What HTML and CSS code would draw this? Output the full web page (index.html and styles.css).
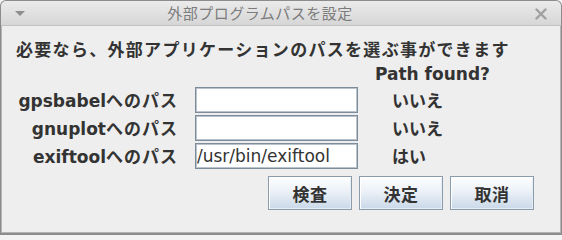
FILE: index.html
```html
<!DOCTYPE html>
<html lang="ja">
<head>
<meta charset="utf-8">
<title>外部プログラムパスを設定</title>
<link rel="stylesheet" href="styles.css">
</head>
<body>
<div class="window">
  <div class="titlebar">
    <span class="menu-tri"></span>
    <span class="title">外部プログラムパスを設定</span>
    <svg class="close" width="12" height="12" viewBox="0 0 12 12"><path d="M1.5 1.5 L10.5 10.5 M10.5 1.5 L1.5 10.5" stroke="#a0a0a0" stroke-width="2.4" stroke-linecap="round"/></svg>
  </div>
  <div class="content">
    <p class="heading">必要なら、外部アプリケーションのパスを選ぶ事ができます</p>
    <div class="grid">
      <span class="col-head">Path found?</span>

      <span class="label">gpsbabel<span class="jp">へのパス</span></span>
      <input class="field" type="text" value="">
      <span class="status">いいえ</span>

      <span class="label">gnuplot<span class="jp">へのパス</span></span>
      <input class="field" type="text" value="">
      <span class="status">いいえ</span>

      <span class="label">exiftool<span class="jp">へのパス</span></span>
      <input class="field" type="text" value="/usr/bin/exiftool">
      <span class="status">はい</span>
    </div>
    <div class="buttons">
      <button class="btn">検査</button>
      <button class="btn">決定</button>
      <button class="btn">取消</button>
    </div>
  </div>
</div>
</body>
</html>
```

FILE: styles.css
```css
html, body {
  margin: 0;
  padding: 0;
  background: #f3f3f3;
}

.window {
  box-sizing: border-box;
  width: 562px;
  height: 235px;
  border: 1px solid #8c8c8c;
  border-bottom-width: 2px;
  border-radius: 6px 6px 0 0;
  background: #eeeeee;
  box-shadow: inset 1px 0 #b4b4b4, inset -1px 0 #b4b4b4, inset 0 -1px #b4b4b4;
  font-family: "DejaVu Sans", "Noto Sans CJK JP", sans-serif;
  color: #333333;
  overflow: hidden;
}

.titlebar {
  box-sizing: border-box;
  height: 25px;
  display: flex;
  align-items: center;
  padding: 0 14px 0 14px;
  background: linear-gradient(#ebebeb, #d6d6d6);
  border-bottom: 1px solid #c2c2c2;
  border-radius: 5px 5px 0 0;
}

.menu-tri {
  width: 0;
  height: 0;
  border-left: 5px solid transparent;
  border-right: 5px solid transparent;
  border-top: 5px solid #8e8e8e;
  margin-top: 1px;
}

.title {
  flex: 1;
  text-align: center;
  padding-right: 40px;
  font-family: "Noto Sans CJK JP", sans-serif;
  font-size: 15px;
  letter-spacing: 0.5px;
  color: #7c7c7c;
  line-height: 20px;
}

.close {
  display: block;
  margin-top: 1px;
}

.content {
  padding: 0 0 0 15px;
}

.heading {
  margin: 13px 0 0 0;
  font-size: 17px;
  font-weight: bold;
  letter-spacing: 1.3px;
  line-height: 22px;
  white-space: nowrap;
}

.grid {
  display: grid;
  grid-template-columns: 162px 163px auto;
  grid-auto-rows: 26px;
  grid-template-rows: 22px;
  column-gap: 17px;
  row-gap: 2px;
  margin-top: 2px;
  align-items: center;
}

.col-head {
  grid-column: 3;
  align-self: start;
  font-size: 17px;
  font-weight: bold;
  line-height: 20px;
  padding-top: 1px;
}

.label {
  grid-column: 1;
  text-align: right;
  font-size: 17px;
  font-weight: bold;
  white-space: nowrap;
  line-height: 20px;
  padding-top: 2px;
}

.jp {
  letter-spacing: 1px;
}

.field {
  grid-column: 2;
  box-sizing: border-box;
  width: 163px;
  height: 26px;
  margin: 0;
  padding: 0 0 0 1px;
  border: 1px solid #7d8c9b;
  box-shadow: inset 1px 1px 0 #b9c3cd, inset -1px -1px 0 #b9c3cd;
  background: #ffffff;
  font-family: "DejaVu Sans", sans-serif;
  font-size: 17px;
  color: #333333;
  outline: none;
}

.status {
  grid-column: 3;
  padding-left: 17px;
  font-size: 17px;
  font-weight: bold;
  line-height: 20px;
  padding-top: 2px;
}

.buttons {
  display: flex;
  justify-content: flex-end;
  gap: 7px;
  margin-top: 7px;
  padding-right: 27px;
}

.btn {
  box-sizing: border-box;
  width: 84px;
  height: 34px;
  margin: 0;
  padding: 0;
  border: 1px solid #8a9bab;
  box-shadow: inset 1px 1px 0 #ffffff, inset -1px -1px 0 #e4ecf4;
  background: linear-gradient(#fdfeff 0%, #eef3f8 40%, #c9d8e8 100%);
  font-family: "Noto Sans CJK JP", sans-serif;
  font-size: 17px;
  font-weight: bold;
  color: #333333;
  letter-spacing: 0.5px;
}
```
